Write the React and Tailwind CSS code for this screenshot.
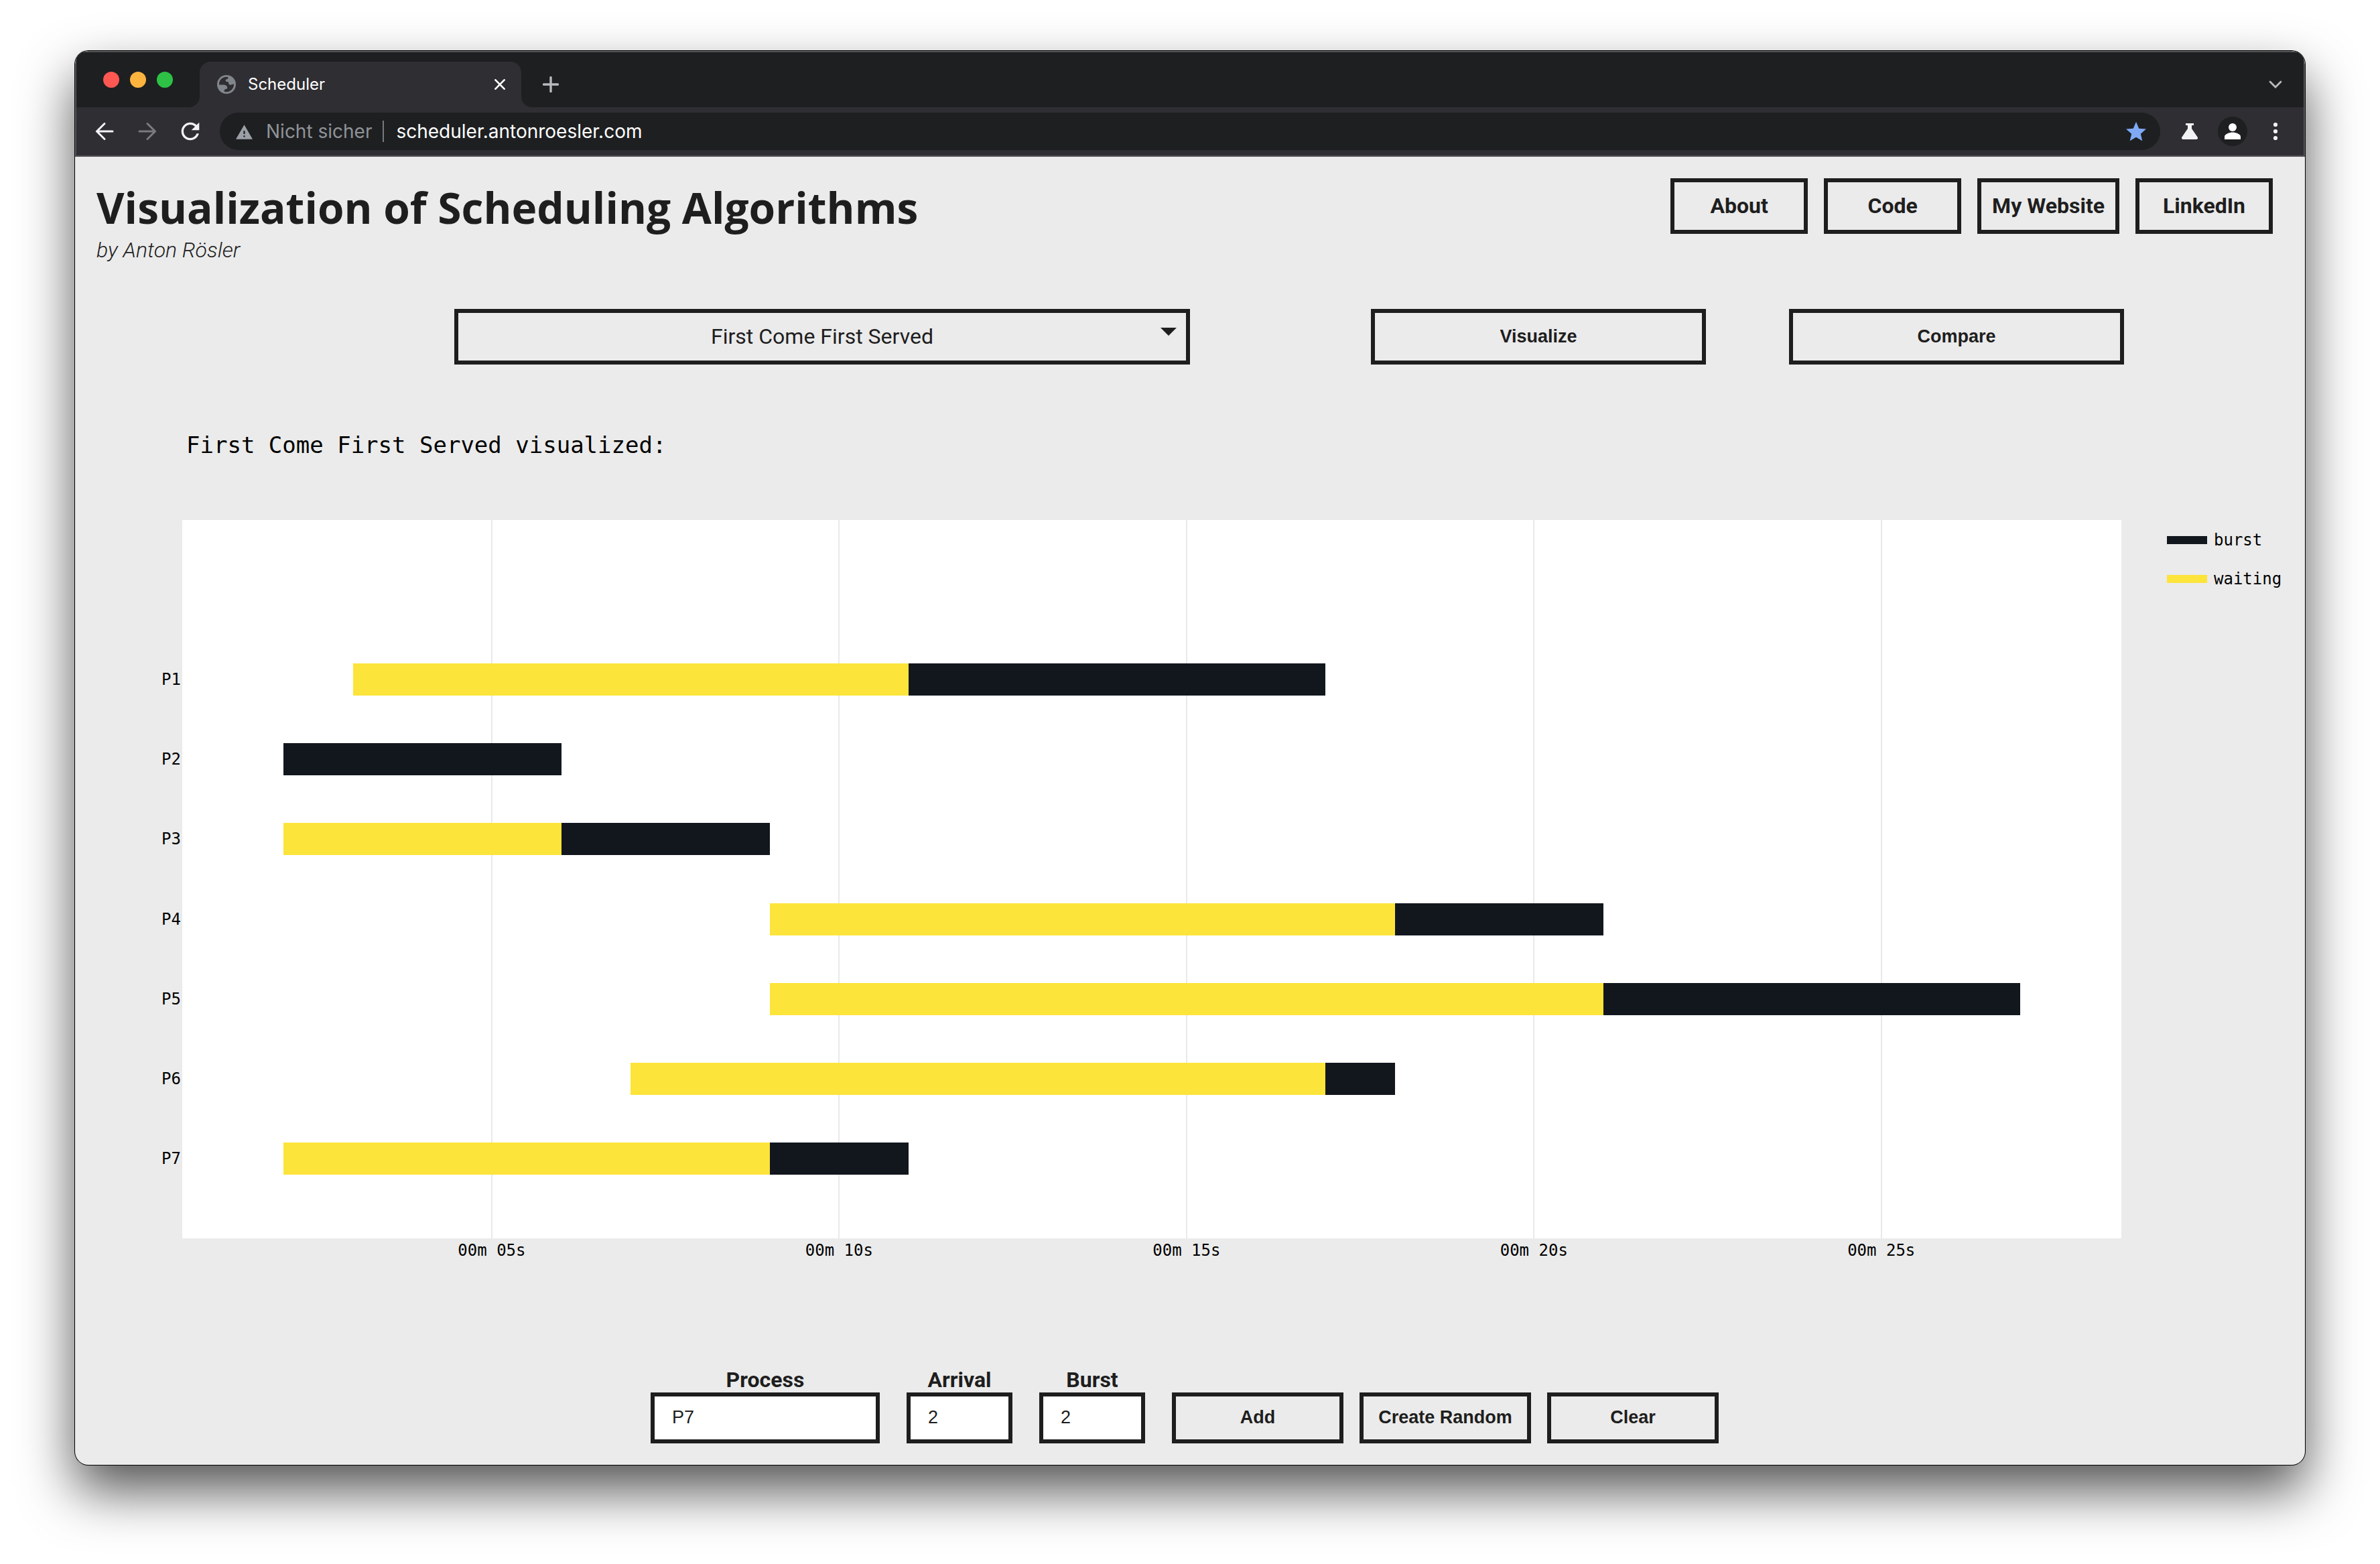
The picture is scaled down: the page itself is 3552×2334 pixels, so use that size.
const PROCESSES = [
  { name: "P1", arrival: 3, start: 11, end: 17 },
  { name: "P2", arrival: 2, start: 2, end: 6 },
  { name: "P3", arrival: 2, start: 6, end: 9 },
  { name: "P4", arrival: 9, start: 18, end: 21 },
  { name: "P5", arrival: 9, start: 21, end: 27 },
  { name: "P6", arrival: 7, start: 17, end: 18 },
  { name: "P7", arrival: 2, start: 9, end: 11 },
];

const TICKS = [5, 10, 15, 20, 25];
const RANGE_START = 0.545;
const RANGE_END = 28.455;
const SPAN = RANGE_END - RANGE_START;

const position = (t) => `${((t - RANGE_START) / SPAN) * 100}%`;
const extent = (d) => `${(d / SPAN) * 100}%`;

function Globe() {
  return (
    <svg viewBox="0 0 28 28" className="size-7 shrink-0" aria-hidden="true">
      <circle cx="14" cy="14" r="14" fill="#80868b" />
      <path
        fill="#2f2e33"
        d="M3 14.6C2.4 8.4 7.6 2.8 14 2.8c1 0 1.8.1 2.4.3L16.2 5.6C13.600 5.900 12.600 7.200 12.800 8.800c.3 1.600 2.200 1.200 4 1.400.2 2.400.6 3.800 2.200 4.300 2 .6 3.800-.6 6-1.200C25.400 19.800 20.300 25.200 14 25.200c-1.400 0-2.500-.2-3.500-.6.1-2.400.8-3.200 2.600-3.500 1.900-.3 2.500-1.600 1.900-3.300-.7-2.100-2.800-3.200-5-3.200z"
      />
    </svg>
  );
}

function TabStrip() {
  return (
    <div className="flex h-[82px] items-end bg-[#1e1f21] pl-10">
      <div className="flex items-center gap-4 self-center">
        <button aria-label="Close window" className="size-6 rounded-full bg-[#ff5752]" />
        <button aria-label="Minimize window" className="size-6 rounded-full bg-[#fdb43f]" />
        <button aria-label="Zoom window" className="size-6 rounded-full bg-[#2dc245]" />
      </div>
      <div className="relative ml-10 flex h-[68px] w-[480px] items-center rounded-t-2xl bg-[#2f2e33] pr-6 pl-[26px]">
        <svg viewBox="0 0 16 16" className="absolute bottom-0 -left-4 size-4" aria-hidden="true">
          <path d="M16 0v16H0A16 16 0 0 0 16 0z" fill="#2f2e33" />
        </svg>
        <svg viewBox="0 0 16 16" className="absolute -right-4 bottom-0 size-4" aria-hidden="true">
          <path d="M0 0v16h16A16 16 0 0 1 0 0z" fill="#2f2e33" />
        </svg>
        <Globe />
        <span className="ml-[18px] flex-1 text-[24px] leading-8 text-white">Scheduler</span>
        <button aria-label="Close tab">
          <svg viewBox="0 0 16 16" className="size-4" fill="none" stroke="#fff" strokeWidth="2.6" aria-hidden="true">
            <path d="M0.500 0.500l15 15M15.500 0.500l-15 15" />
          </svg>
        </button>
      </div>
      <button aria-label="New tab" className="ml-8 flex h-[68px] items-center">
        <svg viewBox="0 0 24 24" className="size-6" fill="none" stroke="#b8babe" strokeWidth="3.400" strokeLinecap="round" aria-hidden="true">
          <path d="M12 1.500v21M1.500 12h21" />
        </svg>
      </button>
      <button aria-label="Search tabs" className="mr-8 ml-auto flex h-[68px] items-center">
        <svg viewBox="0 0 20 12" className="h-3 w-5" fill="none" stroke="#b8babe" strokeWidth="2.800" strokeLinecap="round" aria-hidden="true">
          <path d="M2 2l8 8 8-8" />
        </svg>
      </button>
    </div>
  );
}

function Toolbar() {
  return (
    <div className="flex h-[72px] items-center bg-[#2f2e33] pr-8 pl-[22px]">
      <button aria-label="Back">
        <svg viewBox="0 0 40 40" className="size-10" fill="none" stroke="#f1f3f4" strokeWidth="3" strokeLinecap="round" aria-hidden="true">
          <path d="M32 20H8.500M20 8.500L8.500 20 20 31.500" />
        </svg>
      </button>
      <button aria-label="Forward" className="ml-6">
        <svg viewBox="0 0 40 40" className="size-10" fill="none" stroke="#7b7b7e" strokeWidth="3" strokeLinecap="round" aria-hidden="true">
          <path d="M8 20h23.500M20 8.500L31.500 20 20 31.500" />
        </svg>
      </button>
      <button aria-label="Reload" className="ml-6">
        <svg viewBox="0 0 24 24" className="size-10" fill="#f1f3f4" aria-hidden="true">
          <path d="M17.650 6.350C16.200 4.900 14.210 4 12 4c-4.420 0-7.990 3.580-7.990 8s3.570 8 7.990 8c3.730 0 6.840-2.550 7.730-6h-2.080c-.82 2.330-3.040 4-5.650 4-3.310 0-6-2.690-6-6s2.690-6 6-6c1.660 0 3.140.69 4.220 1.780L13 11h7V4l-2.350 2.350z" />
        </svg>
      </button>
      <div className="ml-6 flex h-14 flex-1 items-center rounded-full bg-[#1e1f21] pr-[18px] pl-6 text-[28px] leading-8">
        <svg viewBox="1 0 22 22" className="size-[25px] shrink-0" fill="#9aa0a6" aria-hidden="true">
          <path d="M1 21h22L12 2 1 21zm12-3h-2v-2h2v2zm0-4h-2v-4h2v4z" />
        </svg>
        <span className="ml-5 text-[#8f9398]">Nicht sicher</span>
        <span className="ml-4 h-8 w-0.5 bg-[#77797d]" />
        <input
          aria-label="Address"
          defaultValue="scheduler.antonroesler.com"
          className="ml-[18px] min-w-0 flex-1 bg-transparent text-white outline-none"
        />
        <button aria-label="Bookmark this page">
          <svg viewBox="0 -0.500 24 24" className="size-9" fill="#7fa9f5" aria-hidden="true">
            <path d="M12 17.270L18.180 21l-1.640-7.030L22 9.240l-7.190-.61L12 2 9.190 8.630 2 9.240l5.460 4.730L5.820 21z" />
          </svg>
        </button>
      </div>
      <button aria-label="Experiments" className="ml-8">
        <svg viewBox="0 0 24 24" className="size-6" fill="#f1f3f4" aria-hidden="true">
          <path d="M6 0h12v3h-3v5l8.600 12.400c1 1.600.2 3.600-1.700 3.600H2.100C.2 24-.6 22 .4 20.400L9 8V3H6z" />
        </svg>
      </button>
      <button aria-label="Profile" className="ml-[30px] flex size-11 items-center justify-center rounded-full bg-[#1e1f21]">
        <svg viewBox="0 0 24 24" className="size-6" fill="#fff" aria-hidden="true">
          <circle cx="12" cy="6" r="6" />
          <path d="M0 24v-4c0-4 7.500-6.500 12-6.500S24 16 24 20v4z" />
        </svg>
      </button>
      <button aria-label="Menu" className="ml-8">
        <svg viewBox="0 0 20 28" className="h-7 w-5" fill="#f1f3f4" aria-hidden="true">
          <circle cx="10" cy="4" r="3.100" />
          <circle cx="10" cy="14" r="3.100" />
          <circle cx="10" cy="24" r="3.100" />
        </svg>
      </button>
    </div>
  );
}

function NavLink({ children }) {
  return (
    <a
      href="#"
      className="flex h-[83px] min-w-[205px] items-center justify-center border-6 border-[#1e1e1e] px-4 pb-0.5 text-[32px] leading-10 font-bold"
    >
      {children}
    </a>
  );
}

function BoxButton({ children, className }) {
  return (
    <button
      className={`border-6 border-[#1e1e1e] pb-0.5 font-['Liberation_Sans',Arial,sans-serif] text-[27px] leading-8 font-bold ${className}`}
    >
      {children}
    </button>
  );
}

function Field({ id, label, value, className }) {
  return (
    <div className={`flex flex-col ${className}`}>
      <label htmlFor={id} className="text-center text-[32px] leading-[38px] font-bold">
        {label}
      </label>
      <input
        id={id}
        defaultValue={value}
        className="h-[76px] w-full border-6 border-[#1e1e1e] bg-white px-[26px] pb-0.5 font-['Liberation_Sans',Arial,sans-serif] text-[27px] leading-8 outline-none"
      />
    </div>
  );
}

function LegendItem({ label, className }) {
  return (
    <li className="flex h-[58px] items-center gap-2.5">
      <span className={`h-3 w-[60px] ${className}`} />
      {label}
    </li>
  );
}

function Chart() {
  return (
    <section
      aria-label="Schedule"
      className="mt-[92px] grid grid-cols-[160px_minmax(0,1fr)_274px] font-['DejaVu_Sans_Mono',monospace] text-[24px] leading-8 text-black"
    >
      <div className="flex h-[1072px] flex-col pr-0.5 text-right">
        <div className="flex-3" />
        {PROCESSES.map((p) => (
          <div key={p.name} className="flex flex-2 items-center justify-end">
            {p.name}
          </div>
        ))}
        <div className="flex-1" />
      </div>

      <div className="relative flex flex-col bg-white">
        {TICKS.map((t) => (
          <div
            key={t}
            className="absolute inset-y-0 -ml-px w-0.5 bg-[#e9e9e9]"
            style={{ left: position(t) }}
          />
        ))}
        <div className="flex-3" />
        {PROCESSES.map((p) => (
          <div key={p.name} className="relative flex flex-2 items-center">
            <div className="absolute h-12 bg-[#fce43b]" style={{ left: position(p.arrival), width: extent(p.start - p.arrival) }} />
            <div className="absolute h-12 bg-[#12171e]" style={{ left: position(p.start), width: extent(p.end - p.start) }} />
          </div>
        ))}
        <div className="flex-1" />
      </div>

      <ul className="pt-px pl-[68px]">
        <LegendItem label="burst" className="bg-[#12171e]" />
        <LegendItem label="waiting" className="bg-[#fce43b]" />
      </ul>

      <div className="relative col-start-2 mt-0.5 h-8">
        {TICKS.map((t) => (
          <span key={t} className="absolute -translate-x-1/2 whitespace-nowrap" style={{ left: position(t) }}>
            {`00m ${String(t).padStart(2, "0")}s`}
          </span>
        ))}
      </div>
    </section>
  );
}

export default function App() {
  return (
    <div className="min-h-screen bg-white px-28 pt-[76px] pb-[148px]">
      <div className="overflow-hidden rounded-[20px] bg-[#ebebeb] shadow-[0_0_0_1px_#000,0_38px_80px_rgba(0,0,0,0.68)]">
        <header className="rounded-t-[20px] border-2 border-[#58565b] bg-[#1e1f21] font-[Inter,sans-serif]">
          <TabStrip />
          <Toolbar />
        </header>

        <main className="pt-8 pb-8 font-[Roboto,sans-serif] text-[#1e1e1e]">
          <div className="flex items-start justify-between pr-12 pl-8">
            <div>
              <h1 className="font-['Open_Sans',sans-serif] text-[64px] leading-[88px] font-bold">
                Visualization of Scheduling Algorithms
              </h1>
              <p className="text-[32px] leading-[38px] font-light italic">by Anton Rösler</p>
            </div>
            <nav className="flex gap-6">
              <NavLink>About</NavLink>
              <NavLink>Code</NavLink>
              <NavLink>My Website</NavLink>
              <NavLink>LinkedIn</NavLink>
            </nav>
          </div>

          <div className="mt-[69px] grid grid-cols-[566fr_1098fr_270fr_500fr_124fr_500fr_270fr]">
            <div className="relative col-start-2">
              <select
                aria-label="Scheduling algorithm"
                className="h-[83px] w-full appearance-none border-6 border-[#1e1e1e] bg-transparent pb-0.5 text-center text-[32px] leading-10 [text-align-last:center]"
              >
                <option>First Come First Served</option>
              </select>
              <svg viewBox="0 0 24 12" className="pointer-events-none absolute top-7 right-5 h-3 w-6" fill="#1e1e1e" aria-hidden="true">
                <path d="M0 0h24L12 12z" />
              </svg>
            </div>
            <BoxButton className="col-start-4">Visualize</BoxButton>
            <BoxButton className="col-start-6">Compare</BoxButton>
          </div>

          <h2 className="mt-[100px] ml-[166px] font-['DejaVu_Sans_Mono',monospace] text-[34px] leading-10 text-black">
            First Come First Served visualized:
          </h2>

          <Chart />

          <form className="mt-[158px] flex items-end justify-center pr-4" onSubmit={(e) => e.preventDefault()}>
            <Field id="process" label="Process" value="P7" className="w-[342px]" />
            <Field id="arrival" label="Arrival" value="2" className="ml-10 w-[158px]" />
            <Field id="burst" label="Burst" value="2" className="ml-10 w-[158px]" />
            <BoxButton className="ml-10 h-[76px] w-[256px]">Add</BoxButton>
            <BoxButton className="ml-6 h-[76px] w-[256px]">Create Random</BoxButton>
            <BoxButton className="ml-6 h-[76px] w-[256px]">Clear</BoxButton>
          </form>
        </main>
      </div>
    </div>
  );
}
